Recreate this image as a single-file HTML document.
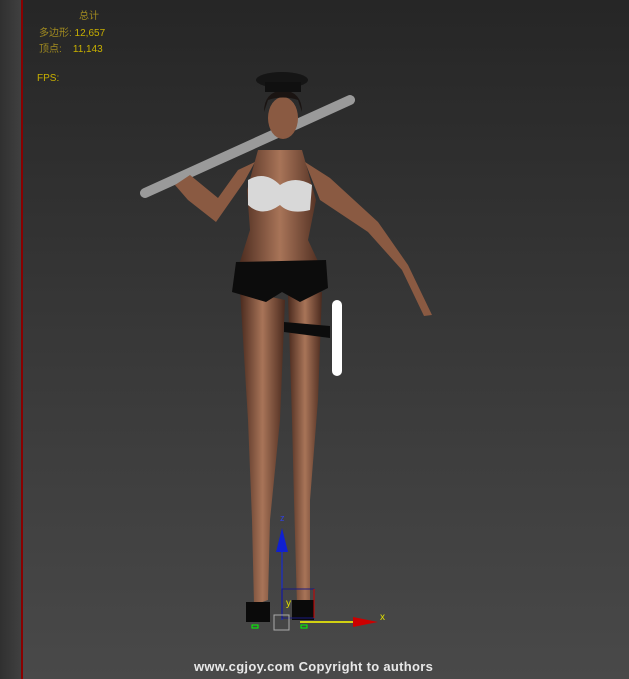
<!DOCTYPE html>
<html><head><style>
html,body{margin:0;padding:0;width:629px;height:679px;overflow:hidden}
body{background:linear-gradient(#262626,#383838 50%,#494949);position:relative;font-family:"Liberation Sans","Noto Sans CJK SC",sans-serif}
.left{position:absolute;left:0;top:0;width:21px;height:679px;background:linear-gradient(90deg,#303030,#404040)}
.red{position:absolute;left:21px;top:0;width:2px;height:679px;background:#8a0000}
.t{position:absolute;font-size:10px;color:#c8b000;white-space:nowrap}
.g{color:#a08a20}
.cp{position:absolute;left:194px;top:659px;font-size:13px;font-weight:bold;color:#e8e8e8;letter-spacing:.3px}
svg{position:absolute;left:0;top:0}
</style></head><body>
<div class="left"></div><div class="red"></div>
<div class="t g" style="left:79px;top:7px">总计</div>
<div class="t" style="left:39px;top:24px"><span class="g">多边形:</span> 12,657</div>
<div class="t" style="left:39px;top:40px"><span class="g">顶点:</span>&nbsp;&nbsp;&nbsp; 11,143</div>
<div class="t" style="left:37px;top:73px">FPS:</div>
<svg width="629" height="679">
<defs><linearGradient id="sk" x1="0" x2="1"><stop offset="0" stop-color="#4a2a1e"/><stop offset=".5" stop-color="#a87458"/><stop offset="1" stop-color="#4a2a1e"/></linearGradient></defs>
<line x1="145" y1="193" x2="350" y2="100" stroke="#9a9a9a" stroke-width="10" stroke-linecap="round"/>
<path d="M240 290 L285 300 L280 420 L270 520 L268 600 L254 605 L252 520 L248 420 Z" fill="url(#sk)"/>
<path d="M288 295 L322 292 L318 400 L310 500 L310 600 L297 605 L294 500 L292 420 Z" fill="url(#sk)"/>
<path d="M246 602 h24 v20 h-24z M292 600 h22 v20 h-22z" fill="#0a0a0a"/>
<path d="M258 150 L302 150 L316 200 L308 240 L322 270 L238 268 L250 230 L247 190 Z" fill="url(#sk)"/>
<path d="M255 162 L238 170 L218 198 L190 175 L175 185 L188 200 L216 222 L244 182 Z" fill="#8a5a42"/>
<path d="M305 162 L330 178 L378 222 L408 265 L432 315 L424 316 L402 270 L368 232 L320 200 Z" fill="#8a5a42"/>
<path d="M248 180 Q265 170 280 185 Q295 175 312 185 L310 210 Q290 215 280 205 Q262 218 248 205 Z" fill="#d8d8d8"/>
<path d="M236 262 L326 260 L328 288 L300 302 L282 292 L266 302 L232 292 Z" fill="#0c0c0c"/>
<path d="M284 322 L330 326 L330 338 L284 332Z" fill="#0c0c0c"/>
<ellipse cx="283" cy="118" rx="15" ry="21" fill="#8a5a42"/>
<path d="M264 112 Q264 92 283 90 Q302 92 302 112 L298 100 Q283 95 268 100Z" fill="#1a1412"/>
<ellipse cx="282" cy="80" rx="26" ry="8" fill="#151515"/>
<rect x="265" y="82" width="36" height="10" fill="#101010"/>
<rect x="332" y="300" width="10" height="76" rx="5" fill="#ffffff"/>
<line x1="282" y1="545" x2="282" y2="620" stroke="#2030b0" stroke-width="1.5"/>
<path d="M282 528 L276 552 L288 552Z" fill="#1020d0"/>
<text x="280" y="521" font-size="9" fill="#3040e0" font-family="Liberation Sans">z</text>
<line x1="300" y1="622" x2="355" y2="622" stroke="#ffff00" stroke-width="1.5"/>
<path d="M353 617 L378 622 L353 627Z" fill="#cc0000"/>
<text x="380" y="620" font-size="10" fill="#e0e000" font-family="Liberation Sans">x</text>
<text x="286" y="606" font-size="10" fill="#e0e000" font-family="Liberation Sans">y</text>
<rect x="282" y="589" width="32" height="29" fill="none" stroke="#1a1a80"/>
<line x1="314" y1="589" x2="314" y2="618" stroke="#d00000"/>
<rect x="274" y="615" width="15" height="15" fill="none" stroke="#aaa"/>
<rect x="252" y="625" width="6" height="3" fill="none" stroke="#0f0"/>
<rect x="301" y="625" width="6" height="3" fill="none" stroke="#0f0"/>
</svg>
<div class="cp">www.cgjoy.com Copyright to authors</div>
</body></html>
